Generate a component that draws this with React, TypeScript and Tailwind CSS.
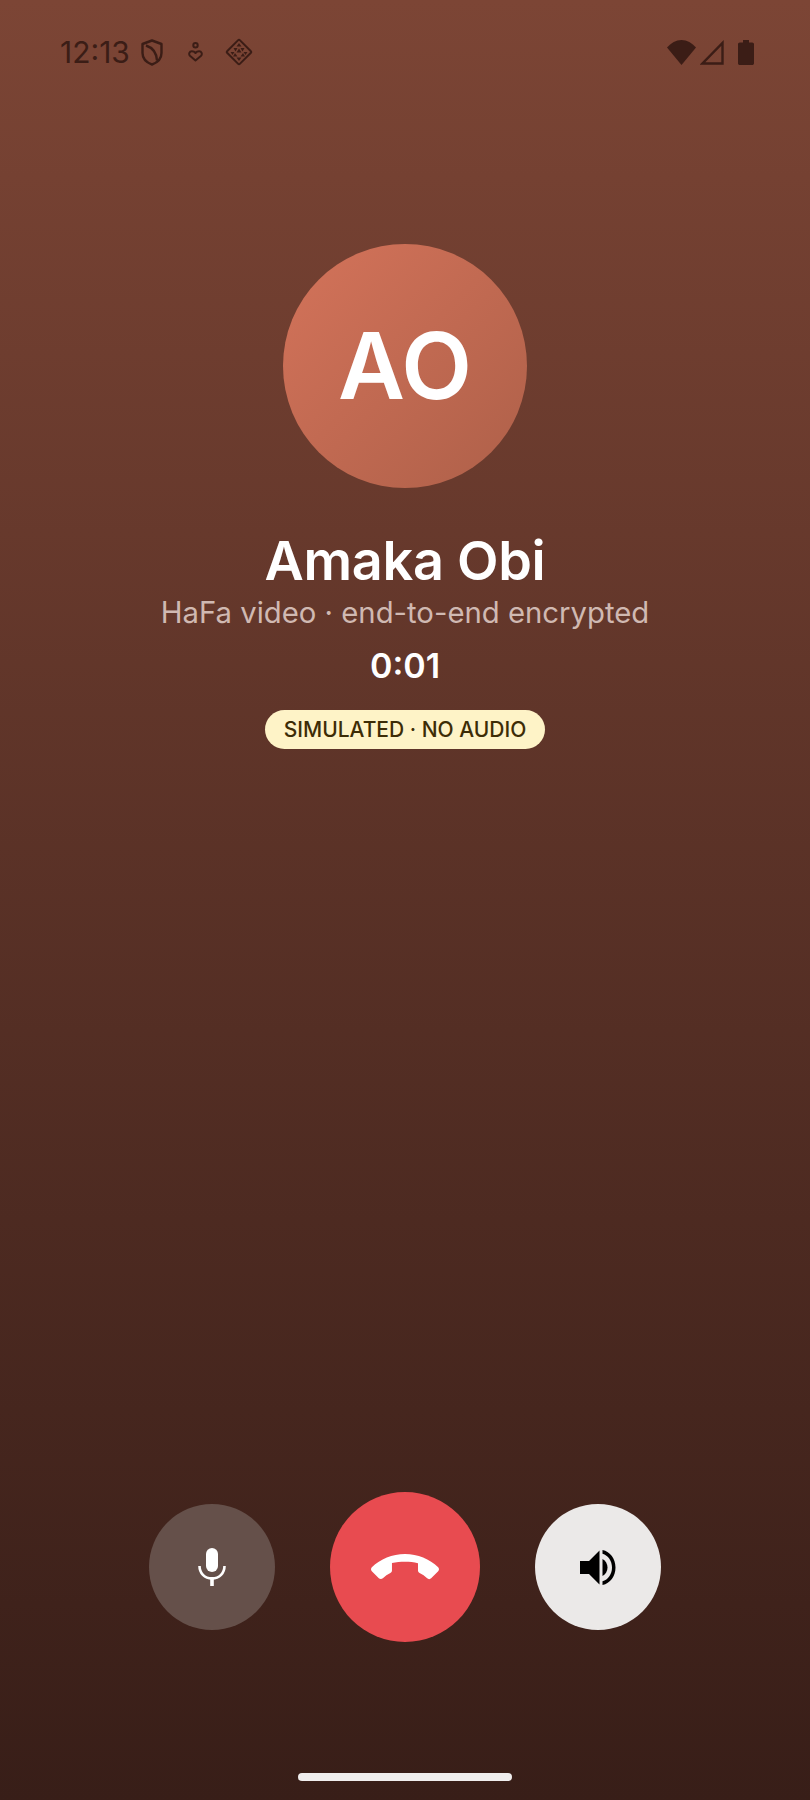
const inter = "font-['Inter',_'Liberation_Sans',_sans-serif]";

function ShieldIcon() {
  return (
    <svg width="22" height="27" viewBox="0 0 22 27" fill="none" stroke="#3b1d16" strokeWidth="2.400">
      <path d="M11 1.500 20.500 5v9c0 5.500-4 9.500-9.500 11.500C5.500 23.500 1.500 19.500 1.500 14V5z" strokeLinejoin="round" />
      <path d="M5 6.500c6 2 10.500 7 11 15" />
    </svg>
  );
}

function PersonHeartIcon() {
  return (
    <svg width="15" height="20" viewBox="0 0 15 20" fill="none" stroke="#3b1d16" strokeWidth="2">
      <circle cx="7.500" cy="3.200" r="2.200" />
      <path d="M7.500 18.500 2.200 14c-2-1.900-.7-4.800 1.700-4.800 1.500 0 2.700.7 3.600 1.800.9-1.100 2.100-1.800 3.600-1.800 2.400 0 3.700 2.900 1.700 4.800z" strokeLinejoin="round" />
    </svg>
  );
}

function DiamondIcon() {
  return (
    <svg width="28" height="28" viewBox="0 0 28 28" fill="none">
      <rect x="5" y="5" width="18" height="18" transform="rotate(45 14 14)" stroke="#3b1d16" strokeWidth="2" rx="1.500" />
      <g fill="#3b1d16">
        <path d="M14 5 16.500 8.500H11.500z" />
        <path d="M8.500 10H12.500L10.500 13.500z" />
        <path d="M15.500 10H19.500L17.500 13.500z" />
        <path d="M14 10.500 16.500 14.500H11.500z" />
        <path d="M5.500 14H9.500L7.500 17z" />
        <path d="M18.500 14H22.500L20.500 17z" />
        <path d="M10 15 12.500 18.500H8z" />
        <path d="M18 15 20 18.500H15.500z" />
        <path d="M11.500 19.500H16.500L14 23z" />
      </g>
    </svg>
  );
}

function WifiIcon() {
  return (
    <svg width="29" height="25" viewBox="0 0 29 25" fill="#3b1d16">
      <path d="M14.500 25 0 7.500C4 3 9 0 14.500 0S25 3 29 7.500z" />
    </svg>
  );
}

function SignalIcon() {
  return (
    <svg width="24" height="25" viewBox="0 0 24 25" fill="none" stroke="#3b1d16" strokeWidth="2.400">
      <path d="M22.500 3V23.500H2.500z" />
    </svg>
  );
}

function BatteryIcon() {
  return (
    <svg width="16" height="25" viewBox="0 0 16 25" fill="#3b1d16">
      <path d="M5 0h6v2.500h3.200c1 0 1.800.8 1.800 1.800v18.900c0 1-.8 1.800-1.800 1.800H1.800c-1 0-1.800-.8-1.800-1.800V4.300c0-1 .8-1.800 1.800-1.800H5z" />
    </svg>
  );
}

function MicIcon() {
  return (
    <svg width="28" height="38" viewBox="0 0 28 38" fill="none">
      <rect x="8" y="0" width="12" height="24" rx="6" fill="#fff" />
      <path d="M1.500 18c0 7 5 12.500 12.500 12.500S26.500 25 26.500 18" stroke="#fff" strokeWidth="2.600" />
      <rect x="12.200" y="29" width="3.600" height="9" fill="#fff" />
    </svg>
  );
}

function HangupIcon() {
  return (
    <svg width="68" height="27" viewBox="0 7 24 9.500" fill="#fff">
      <path d="M12 9.700c-1.600 0-3.150.1-4.600.5v2.620c0 .39-.23.74-.56.9-.98.49-1.870 1.120-2.660 1.850-.18.18-.43.28-.7.28-.28 0-.53-.11-.71-.29L.29 13.080c-.18-.17-.29-.42-.29-.7 0-.28.11-.53.29-.71C3.340 8.780 7.460 7 12 7s8.660 1.780 11.710 4.670c.18.18.29.43.29.71 0 .28-.11.53-.29.71l-2.480 2.480c-.18.18-.43.29-.71.29-.27 0-.52-.11-.7-.28-.79-.74-1.690-1.360-2.670-1.850-.33-.16-.56-.5-.56-.9v-2.620C15.150 9.800 13.600 9.700 12 9.700z" />
    </svg>
  );
}

function SpeakerIcon() {
  return (
    <svg width="36" height="35" viewBox="0 0 36 35" fill="#000">
      <path d="M0 11h9L19.500 .5v34L9 24H0z" />
      <path d="M22.500 9c3.200 1.700 5 4.900 5 8.500s-1.800 6.800-5 8.500z" />
      <path d="M22.500 0c7.700 1.500 13 8.800 13 17.500s-5.300 16-13 17.500v-3.700c5.700-1.500 9.500-7.300 9.500-13.800S28.200 5.200 22.500 3.700z" />
    </svg>
  );
}

export default function App() {
  return (
    <div className={`${inter} relative flex h-[1800px] w-[810px] flex-col items-center overflow-hidden bg-gradient-to-b from-[#7c4535] to-[#381e18]`}>
      {/* Status bar */}
      <div className="flex h-[104px] w-full shrink-0 items-center justify-between pl-[60px] pr-[56px]">
        <div className="flex items-center text-[#3b1d16]">
          <span className="text-[30px] font-normal leading-none">12:13</span>
          <div className="ml-[11px] flex items-center">
            <ShieldIcon />
            <div className="ml-[25px]"><PersonHeartIcon /></div>
            <div className="ml-[22px]"><DiamondIcon /></div>
          </div>
        </div>
        <div className="flex items-center gap-[4px]">
          <WifiIcon />
          <SignalIcon />
          <div className="ml-[10px]"><BatteryIcon /></div>
        </div>
      </div>

      {/* Avatar */}
      <div className="mt-[140px] flex h-[244px] w-[244px] shrink-0 items-center justify-center rounded-full bg-gradient-to-br from-[#d4735a] to-[#ae6049]">
        <span className="text-[92px] font-semibold leading-none text-white">AO</span>
      </div>

      {/* Caller */}
      <h1 className="mt-[39px] text-[54px] font-semibold leading-[68px] tracking-[-0.3px] text-white">Amaka Obi</h1>
      <p className="text-[29.300px] leading-[36px] text-[#d0b9b2]">HaFa video · end-to-end encrypted</p>
      <p className="mt-[15px] text-[34px] font-semibold leading-[40px] text-white">0:01</p>
      <div className="mt-[24px] flex h-[39px] w-[280px] items-center justify-center rounded-full bg-[#fef3c7]">
        <span className="text-[21px] font-medium leading-none text-[#3d2c06]">SIMULATED · NO AUDIO</span>
      </div>

      {/* Call controls */}
      <div className="mt-auto flex items-center gap-[55px] pb-[158px]">
        <button className="flex h-[126px] w-[126px] items-center justify-center rounded-full bg-[#65504a]">
          <MicIcon />
        </button>
        <button className="flex h-[150px] w-[150px] items-center justify-center rounded-full bg-[#e84b50]">
          <HangupIcon />
        </button>
        <button className="flex h-[126px] w-[126px] items-center justify-center rounded-full bg-[#ebe9e8]">
          <SpeakerIcon />
        </button>
      </div>

      {/* Home indicator */}
      <div className="absolute bottom-[19px] left-[298px] h-[8px] w-[214px] rounded-full bg-[#f0eeee]" />
    </div>
  );
}
